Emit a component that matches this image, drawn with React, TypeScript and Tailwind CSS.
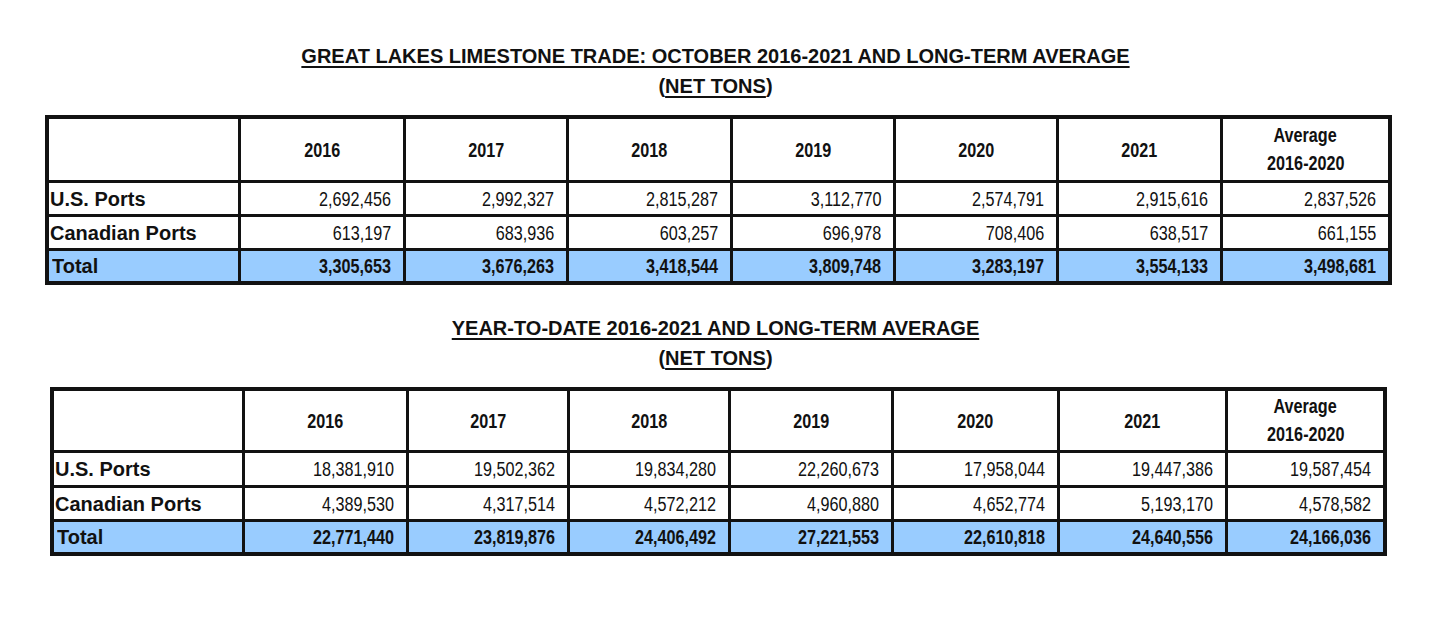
const font = "font-['Liberation_Sans',Arial,sans-serif]";

type Table = {
  left: string;
  cols: string;
  rows: string;
  us: string[];
  ca: string[];
  total: string[];
};

const years = ["2016", "2017", "2018", "2019", "2020", "2021"];

const tables: Table[] = [
  {
    left: "ml-[45px]",
    cols: "grid-cols-[189px_162px_160px_161px_160px_160px_161px_165px]",
    rows: "grid-rows-[61px_31px_31px_30px]",
    us: ["2,692,456", "2,992,327", "2,815,287", "3,112,770", "2,574,791", "2,915,616", "2,837,526"],
    ca: ["613,197", "683,936", "603,257", "696,978", "708,406", "638,517", "661,155"],
    total: ["3,305,653", "3,676,263", "3,418,544", "3,809,748", "3,283,197", "3,554,133", "3,498,681"],
  },
  {
    left: "ml-[50px]",
    cols: "grid-cols-[188px_161px_158px_158px_160px_163px_165px_155px]",
    rows: "grid-rows-[59px_32px_31px_30px]",
    us: ["18,381,910", "19,502,362", "19,834,280", "22,260,673", "17,958,044", "19,447,386", "19,587,454"],
    ca: ["4,389,530", "4,317,514", "4,572,212", "4,960,880", "4,652,774", "5,193,170", "4,578,582"],
    total: ["22,771,440", "23,819,876", "24,406,492", "27,221,553", "22,610,818", "24,640,556", "24,166,036"],
  },
];

function Title({ text }: { text: string }) {
  return (
    <div className="text-center text-[20px] leading-[30px] font-bold text-[#111]">
      <div className="underline decoration-2 underline-offset-[3px]">{text}</div>
      <div>
        (<span className="underline decoration-2 underline-offset-[3px]">NET TONS</span>)
      </div>
    </div>
  );
}

function Num({ value, bold }: { value: string; bold?: boolean }) {
  return (
    <div className={`flex items-center justify-end pr-[12px] ${bold ? "bg-[#99ccff] font-bold" : "bg-white"}`}>
      <span className="inline-block origin-right scale-x-[0.81] scale-y-[1.05] text-[20px] leading-none">{value}</span>
    </div>
  );
}

function Label({ text, total }: { text: string; total?: boolean }) {
  return (
    <div className={`flex items-center text-[20px] font-bold ${total ? "bg-[#99ccff] pl-[3px]" : "bg-white pl-[1px]"}`}>
      <span className="inline-block scale-y-[1.05] leading-none">{text}</span>
    </div>
  );
}

function DataTable({ t }: { t: Table }) {
  return (
    <div className={`${t.left} grid w-fit ${t.cols} ${t.rows} gap-[3px] bg-[#121212] p-[4px] text-[#111]`}>
      <div className="bg-white" />
      {years.map((y) => (
        <div key={y} className="flex items-center justify-center bg-white font-bold">
          <span className="inline-block scale-x-[0.81] scale-y-[1.05] text-[20px] leading-none">{y}</span>
        </div>
      ))}
      <div className="flex flex-col items-center justify-center bg-white pb-[2px] font-bold">
        <span className="inline-block scale-x-[0.81] scale-y-[1.05] text-[20px] leading-[28px]">Average</span>
        <span className="inline-block scale-x-[0.81] scale-y-[1.05] text-[20px] leading-[28px]">2016-2020</span>
      </div>

      <Label text="U.S. Ports" />
      {t.us.map((v, i) => (
        <Num key={i} value={v} />
      ))}

      <Label text="Canadian Ports" />
      {t.ca.map((v, i) => (
        <Num key={i} value={v} />
      ))}

      <Label text="Total" total />
      {t.total.map((v, i) => (
        <Num key={i} value={v} bold />
      ))}
    </div>
  );
}

export default function App() {
  return (
    <div className={`${font} h-[617px] w-[1431px] bg-white pt-[41px]`}>
      <Title text="GREAT LAKES LIMESTONE TRADE: OCTOBER 2016-2021 AND LONG-TERM AVERAGE" />
      <div className="mt-[14px]">
        <DataTable t={tables[0]} />
      </div>
      <div className="mt-[28px]">
        <Title text="YEAR-TO-DATE 2016-2021 AND LONG-TERM AVERAGE" />
      </div>
      <div className="mt-[14px]">
        <DataTable t={tables[1]} />
      </div>
    </div>
  );
}
